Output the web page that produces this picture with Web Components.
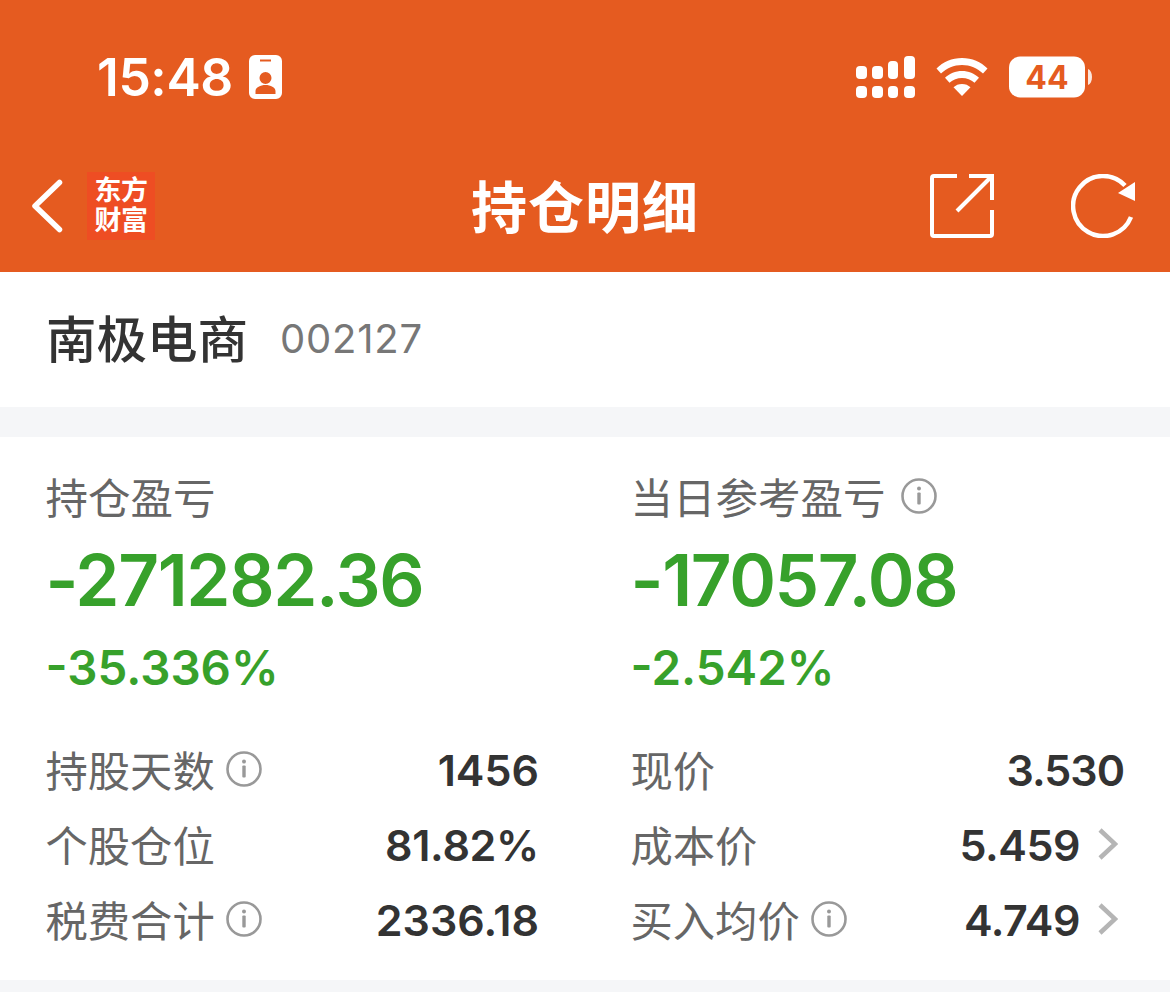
<!DOCTYPE html>
<html lang="zh">
<head>
<meta charset="utf-8">
<style>
  html, body { margin: 0; padding: 0; background: #f5f6f8; }
  body { width: 1170px; height: 992px; overflow: hidden; font-family: Inter, "Noto Sans CJK SC", sans-serif; }
</style>
</head>
<body>
<app-header></app-header>
<stock-title name="南极电商" code="002127"></stock-title>
<position-card></position-card>

<script>
const FONT = 'Inter, "Noto Sans CJK SC", sans-serif';
const INFO = `<svg width="36" height="36" viewBox="0 0 36 36" fill="none"><circle cx="18" cy="18" r="16.5" stroke="#999" stroke-width="2.6"/><circle cx="18" cy="10.6" r="2" fill="#999"/><rect x="16.3" y="14.6" width="3.4" height="12" rx="1" fill="#999"/></svg>`;

// Orange status bar + nav bar
class AppHeader extends HTMLElement {
    constructor() {
        super();
        const shadow = this.attachShadow({ mode: 'open' });
        shadow.innerHTML = `
            <style>
                :host { display: block; height: 272px; background: #e55b20; color: #fff; font-family: ${FONT}; }
                .status { height: 150px; display: flex; align-items: center; justify-content: space-between; padding: 4px 78px 0 97px; box-sizing: border-box; }
                .time { display: flex; align-items: center; gap: 16px; font-size: 51.500px; font-weight: 600; letter-spacing: -0.4px; }
                .right { display: flex; align-items: center; gap: 21px; }
                .nav { height: 122px; display: flex; align-items: center; padding: 0 34px 10px 31px; box-sizing: border-box; position: relative; }
                .left { display: flex; align-items: center; gap: 24px; }
                .logo { width: 68px; height: 68px; background: #ee4d23; display: flex; flex-direction: column; align-items: center; justify-content: center; font-family: "Liberation Sans", "Noto Sans CJK SC", sans-serif; font-weight: 700; font-size: 27px; letter-spacing: -0.5px; }
                .logo span { display: block; line-height: 30px; }
                .title { position: absolute; left: 0; right: 0; margin-top: -6px; text-align: center; font-family: "Noto Sans CJK SC", sans-serif; font-size: 56px; font-weight: 700; letter-spacing: 1px; }
                .actions { margin-left: auto; display: flex; align-items: center; gap: 77px; position: relative; }
                svg { display: block; }
            </style>
            <div class="status">
                <div class="time">15:48
                    <svg width="33" height="44" viewBox="0 0 33 44"><path fill="#fff" fill-rule="evenodd" d="M6 0h21a6 6 0 0 1 6 6v32a6 6 0 0 1-6 6H6a6 6 0 0 1-6-6V6a6 6 0 0 1 6-6zM11 4.500v2h11v-2zM16.500 17a6 6 0 1 0 0 12 6 6 0 0 0 0-12zM6.500 39h20v-3c0-3.500-5-6-10-6s-10 2.500-10 6z"/></svg>
                </div>
                <div class="right">
                    <svg width="59" height="42" viewBox="0 0 59 42" fill="#fff"><rect x="0" y="10" width="11" height="13" rx="4"/><rect x="16" y="10" width="11" height="13" rx="4"/><rect x="32" y="5" width="10" height="18" rx="4"/><rect x="48" y="0" width="11" height="23" rx="4"/><rect x="0" y="30" width="11" height="12" rx="4"/><rect x="16" y="30" width="11" height="12" rx="4"/><rect x="32" y="30" width="10" height="12" rx="4"/><rect x="48" y="30" width="11" height="12" rx="4"/></svg>
                    <svg width="52" height="38" viewBox="0 0 52 38" fill="#fff"><path d="M26 0c10 0 19 4 25.500 10.500L47 15.500C41.500 10.300 34 7 26 7S10.500 10.300 5 15.500L.5 10.500C7 4 16 0 26 0z"/><path d="M26 13c6.500 0 12.500 2.600 17 6.800l-4.500 5C35 21.600 30.700 20 26 20s-9 1.600-12.500 4.800l-4.500-5C13.500 15.600 19.500 13 26 13z"/><path d="M26 26c3.300 0 6.300 1.200 8.500 3.300L26 38l-8.500-8.700C19.700 27.200 22.700 26 26 26z"/></svg>
                    <svg width="83" height="42" viewBox="0 0 83 42"><rect width="76" height="41" y="0.500" rx="11" fill="#fff"/><path d="M79 13c2.500 1 4 4 4 8s-1.500 7-4 8z" fill="#fff" opacity=".85"/><text x="38" y="33" text-anchor="middle" fill="#e55b20" font-family="Inter, sans-serif" font-weight="700" font-size="32">44</text></svg>
                </div>
            </div>
            <div class="nav">
                <div class="title">持仓明细</div>
                <div class="left">
                    <svg width="32" height="54" viewBox="0 0 32 54" fill="none"><path d="M28.500 3.500 4 27l24.500 23.500" stroke="#fff" stroke-width="5.500" stroke-linecap="round" stroke-linejoin="round"/></svg>
                    <div class="logo"><span>东方</span><span>财富</span></div>
                </div>
                <div class="actions">
                    <svg width="64" height="64" viewBox="0 0 64 64" fill="none" stroke="#fff" stroke-width="4"><path d="M25 2H4a2 2 0 0 0-2 2v56a2 2 0 0 0 2 2h56a2 2 0 0 0 2-2V38" stroke-linecap="square"/><path d="M39 2h23v24"/><path d="M62 2 27 37"/></svg>
                    <svg width="65" height="64" viewBox="0 0 65 64" fill="none"><path d="M60 43A30 30 0 1 1 54 11.500" stroke="#fff" stroke-width="4.500"/><path d="M64 8v19L47 19z" fill="#fff"/></svg>
                </div>
            </div>
        `;
    }
}
customElements.define('app-header', AppHeader);

class StockTitle extends HTMLElement {
    constructor() {
        super();
        const shadow = this.attachShadow({ mode: 'open' });
        shadow.innerHTML = `
            <style>
                :host { display: flex; height: 135px; align-items: center; gap: 32px; padding: 0 46px 8px; background: #fff; box-sizing: border-box; margin-bottom: 30px; font-family: ${FONT}; }
                .name { font-family: "Noto Sans CJK SC", sans-serif; font-size: 50.500px; font-weight: 500; color: #333; }
                .code { font-size: 40px; color: #777; letter-spacing: 0.8px; padding-top: 5px; }
            </style>
            <span class="name">${this.getAttribute('name')}</span>
            <span class="code">${this.getAttribute('code')}</span>
        `;
    }
}
customElements.define('stock-title', StockTitle);

// One label / value row
class StatRow extends HTMLElement {
    constructor() {
        super();
        const shadow = this.attachShadow({ mode: 'open' });
        const info = this.hasAttribute('info');
        const arrow = this.hasAttribute('arrow');
        const spacing = this.getAttribute('spacing') || 0;
        shadow.innerHTML = `
            <style>
                :host { display: flex; align-items: center; height: 75px; }
                .label { font-family: "Noto Sans CJK SC", sans-serif; font-size: 42.300px; color: #666; display: flex; align-items: center; gap: 11px; margin-left: -1.5px; }
                .value { margin-left: auto; padding-top: 3px; font-family: Inter, sans-serif; font-size: 43px; font-weight: 600; color: #333; letter-spacing: ${spacing}px; }
                .arrow { margin: 0 6px 0 18px; display: block; }
            </style>
            <span class="label">${this.getAttribute('label')}${info ? INFO : ''}</span>
            <span class="value">${this.getAttribute('value')}</span>
            ${arrow ? `<svg class="arrow" width="20" height="34" viewBox="0 0 20 34" fill="none"><path d="M2 3l15 14L2 31" stroke="#b5b5b5" stroke-width="4.500"/></svg>` : ''}
        `;
    }
}
customElements.define('stat-row', StatRow);

class ProfitBlock extends HTMLElement {
    constructor() {
        super();
        const shadow = this.attachShadow({ mode: 'open' });
        const info = this.hasAttribute('info');
        shadow.innerHTML = `
            <style>
                :host { display: block; }
                .label { font-family: "Noto Sans CJK SC", sans-serif; font-size: 42.500px; line-height: 54px; color: #666; display: flex; align-items: center; gap: 15px; margin-left: -1.5px; }
                .amount { font-family: Inter, sans-serif; font-size: 71px; font-weight: 600; line-height: 114px; margin-left: -1.5px; color: #37a12b; letter-spacing: -1.4px; }
                .pct { font-family: Inter, sans-serif; font-size: 47.500px; font-weight: 600; line-height: 62px; margin-left: -1.5px; color: #37a12b; }
                svg { display: block; }
            </style>
            <div class="label">${this.getAttribute('label')}${info ? INFO : ''}</div>
            <div class="amount">${this.getAttribute('amount')}</div>
            <div class="pct">${this.getAttribute('pct')}</div>
        `;
    }
}
customElements.define('profit-block', ProfitBlock);

class PositionCard extends HTMLElement {
    constructor() {
        super();
        const shadow = this.attachShadow({ mode: 'open' });
        shadow.innerHTML = `
            <style>
                :host { display: grid; grid-template-columns: 492px 492px; column-gap: 93px; padding: 32px 47px 22px; height: 543px; box-sizing: border-box; background: #fff; align-content: start; }
                .rows { margin-top: 32px; }
            </style>
            <profit-block label="持仓盈亏" amount="-271282.36" pct="-35.336%"></profit-block>
            <profit-block label="当日参考盈亏" amount="-17057.08" pct="-2.542%" info></profit-block>
            <div class="rows">
                <stat-row label="持股天数" value="1456" info></stat-row>
                <stat-row label="个股仓位" value="81.82%" spacing="-0.3"></stat-row>
                <stat-row label="税费合计" value="2336.18" info></stat-row>
            </div>
            <div class="rows">
                <stat-row label="现价" value="3.530" spacing="-1"></stat-row>
                <stat-row label="成本价" value="5.459" arrow spacing="-0.5"></stat-row>
                <stat-row label="买入均价" value="4.749" info arrow spacing="-0.5"></stat-row>
            </div>
        `;
    }
}
customElements.define('position-card', PositionCard);
</script>
</body>
</html>
